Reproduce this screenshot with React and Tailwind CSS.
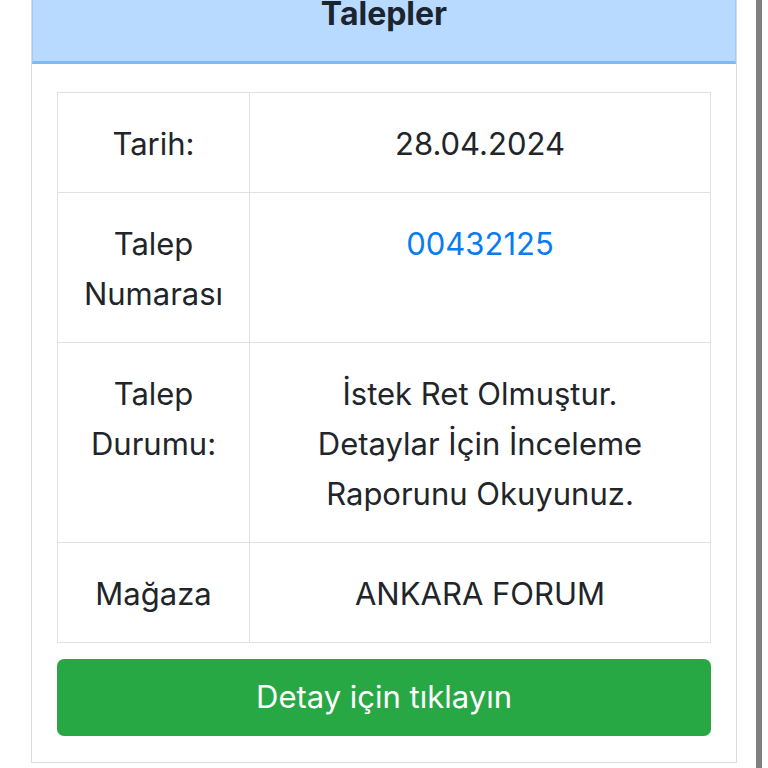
const rows = [
  { label: "Tarih:", value: "28.04.2024" },
  { label: "Talep Numarası", value: "00432125", link: true },
  {
    label: "Talep Durumu:",
    value: "İstek Ret Olmuştur. Detaylar İçin İnceleme Raporunu Okuyunuz.",
  },
  { label: "Mağaza", value: "ANKARA FORUM" },
];

export default function App() {
  return (
    <div
      className="flex h-[768px] overflow-hidden bg-white text-[#212529]"
      style={{ fontFamily: "Inter, 'Noto Sans', sans-serif" }}
    >
      <div className="ml-[31px] -mt-[35px] w-[706px] self-start border border-[#dcdcdc] bg-white">
        <div className="border-x border-[#9ccafb] border-b-[3px] border-b-[#7db9f7] bg-[#b8daff] py-[23px] text-center text-[32px] font-bold leading-[49px] text-[#1c2430]">
          Talepler
        </div>

        <div className="px-[25px] pt-[28px] pb-[26px]">
          <table className="w-full border-collapse text-center text-[31px] leading-[50px]">
            <tbody>
              {rows.map((row) => (
                <tr key={row.label}>
                  <td className="w-[192px] border border-[#dee2e6] px-[18px] pt-[26px] pb-[23px] align-top">
                    {row.label}
                  </td>
                  <td className="border border-[#dee2e6] px-[40px] pt-[26px] pb-[23px] align-top">
                    {row.link ? (
                      <a href="#" className="text-[#0a7cf2]">
                        {row.value}
                      </a>
                    ) : (
                      row.value
                    )}
                  </td>
                </tr>
              ))}
            </tbody>
          </table>

          <button className="mt-[16px] flex h-[77px] w-full items-center justify-center rounded-[7px] bg-[#28a745] text-[31px] text-white">
            Detay için tıklayın
          </button>
        </div>
      </div>

      <div className="ml-[19px] h-full w-[6px] bg-[#7f7f7f]" />
    </div>
  );
}
